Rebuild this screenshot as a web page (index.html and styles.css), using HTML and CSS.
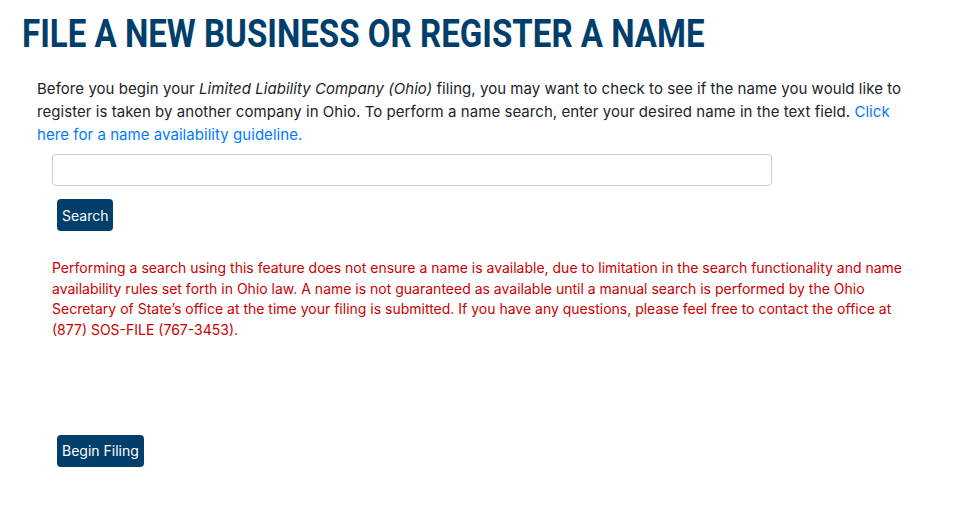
FILE: index.html
```html
<!DOCTYPE html>
<html lang="en">
<head>
    <meta charset="UTF-8">
    <meta name="viewport" content="width=device-width, initial-scale=1.0">
    <title>File a New Business or Register a Name</title>
    <link rel="stylesheet" href="styles.css">
</head>
<body>

    <!-- Page title -->
    <div class="page-title">
        <h1>FILE A NEW BUSINESS OR REGISTER A NAME</h1>
    </div>

    <!-- Name search -->
    <div class="main-content">
        <p class="intro">
            Before you begin your <em>Limited Liability Company (Ohio)</em> filing, you may want to check to see if the name you would like to register is taken by another company in Ohio. To perform a name search, enter your desired name in the text field. <a href="#">Click here for a name availability guideline.</a>
        </p>

        <form class="search-form" id="search-form">
            <input type="text" name="business-name">
            <div class="btn-row">
                <button type="submit" class="btn">Search</button>
            </div>
        </form>

        <p class="disclaimer">
            Performing a search using this feature does not ensure a name is available, due to limitation in the search functionality and name availability rules set forth in Ohio law. A name is not guaranteed as available until a manual search is performed by the Ohio Secretary of State’s office at the time your filing is submitted. If you have any questions, please feel free to contact the office at (877) SOS-FILE (767-3453).
        </p>

        <div class="btn-row begin">
            <button type="button" class="btn">Begin Filing</button>
        </div>
    </div>

</body>
</html>
```

FILE: styles.css
```css
body {
    font-family: 'Inter', 'Roboto', Helvetica, Arial, sans-serif;
    margin: 0;
    padding: 0;
    background: #fff;
    color: #212529;
}
.page-title {
    padding: 12px 0 0 22px;
    height: 48px;
}
.page-title h1 {
    margin: 0;
    font-family: 'Roboto', sans-serif;
    font-weight: 700;
    font-size: 38px;
    line-height: 44px;
    color: #003e6b;
    white-space: nowrap;
    transform: scaleX(0.87);
    transform-origin: left center;
}
.main-content {
    padding: 17px 0 0 37px;
    width: 880px;
}
.intro {
    margin: 0;
    font-size: 15px;
    line-height: 23px;
    letter-spacing: 0.05px;
}
.intro a {
    color: #007bff;
    text-decoration: none;
}
.search-form {
    padding-left: 15px;
    margin-top: 8px;
}
.search-form input[type="text"] {
    display: block;
    width: 720px;
    height: 32px;
    box-sizing: border-box;
    border: 1px solid #ccc;
    border-radius: 4px;
    margin: 0;
}
.btn-row {
    padding-left: 5px;
    margin-top: 13px;
}
.btn {
    font-family: 'Inter', Helvetica, Arial, sans-serif;
    font-size: 14px;
    height: 32px;
    padding: 0 5px;
    background-color: #003e6b;
    color: white;
    border: none;
    border-radius: 4px;
    cursor: pointer;
}
.disclaimer {
    margin: 27px 0 0 15px;
    font-size: 14px;
    line-height: 20.7px;
    color: #cc0000;
    width: 862px;
}
.btn-row.begin {
    margin-top: 94px;
    padding-left: 20px;
}
```
